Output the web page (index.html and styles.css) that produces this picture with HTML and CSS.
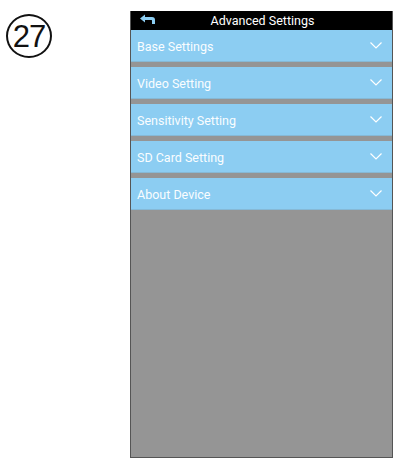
FILE: index.html
```html
<!DOCTYPE html>
<html>
<head>
<meta charset="utf-8">
<link rel="stylesheet" href="styles.css">
</head>
<body>
<div class="page">
  <div class="badge"><span>27</span></div>
  <div class="phone">
    <div class="topbar">
      <svg class="back" width="18" height="12" viewBox="0 0 18 12">
        <path d="M1 4.5 L6 0.5 L6 3 L13 3 Q16 3 16 6 L16 10 L13 10 L13 6.5 Q13 6 12.5 6 L6 6 L6 8.5 Z" fill="#8ccdf2"/>
      </svg>
      <div class="title">Advanced Settings</div>
    </div>
    <div class="list">
      <div class="row"><span>Base Settings</span><svg class="chev" width="12" height="7" viewBox="0 0 12 7"><path d="M0.5 0.5 L6 6 L11.5 0.5" fill="none" stroke="#fff" stroke-width="1.2"/></svg></div>
      <div class="row"><span>Video Setting</span><svg class="chev" width="12" height="7" viewBox="0 0 12 7"><path d="M0.5 0.5 L6 6 L11.5 0.5" fill="none" stroke="#fff" stroke-width="1.2"/></svg></div>
      <div class="row"><span>Sensitivity Setting</span><svg class="chev" width="12" height="7" viewBox="0 0 12 7"><path d="M0.5 0.5 L6 6 L11.5 0.5" fill="none" stroke="#fff" stroke-width="1.2"/></svg></div>
      <div class="row"><span>SD Card Setting</span><svg class="chev" width="12" height="7" viewBox="0 0 12 7"><path d="M0.5 0.5 L6 6 L11.5 0.5" fill="none" stroke="#fff" stroke-width="1.2"/></svg></div>
      <div class="row"><span>About Device</span><svg class="chev" width="12" height="7" viewBox="0 0 12 7"><path d="M0.5 0.5 L6 6 L11.5 0.5" fill="none" stroke="#fff" stroke-width="1.2"/></svg></div>
    </div>
  </div>
</div>
</body>
</html>
```

FILE: styles.css
```css
html, body {
  margin: 0;
  padding: 0;
  background: #ffffff;
}
.page {
  width: 402px;
  height: 469px;
  position: relative;
  display: flex;
  align-items: flex-start;
}
.badge {
  width: 42px;
  height: 40px;
  border: 2px solid #111;
  border-radius: 50%;
  margin: 14px 0 0 6px;
  display: flex;
  align-items: center;
  justify-content: center;
  font-family: "Liberation Sans", Arial, sans-serif;
  font-size: 31px;
  color: #111;
  letter-spacing: -1px;
}
.badge span {
  margin-top: 1px;
}
.phone {
  margin: 11px 0 0 78px;
  width: 263px;
  height: 447px;
  background: #959595;
  border: 1px solid #555;
  border-top: none;
  box-sizing: border-box;
  display: flex;
  flex-direction: column;
}
.topbar {
  height: 19px;
  background: #000;
  position: relative;
  display: flex;
  align-items: center;
  justify-content: center;
}
.back {
  position: absolute;
  left: 8px;
  top: 3px;
}
.title {
  font-family: Roboto, "Liberation Sans", sans-serif;
  font-size: 12.5px;
  color: #fff;
  margin-left: 2px;
}
.list {
  display: flex;
  flex-direction: column;
  gap: 5px;
}
.row {
  height: 32px;
  background: #8ccdf2;
  border-bottom: 1px solid #86b9d6;
  box-sizing: border-box;
  display: flex;
  align-items: center;
  justify-content: space-between;
  padding: 2px 10px 0 6px;
  font-family: Roboto, "Liberation Sans", sans-serif;
  font-size: 12.5px;
  color: #fafdff;
}
.chev {
  margin-top: -2px;
}
```
